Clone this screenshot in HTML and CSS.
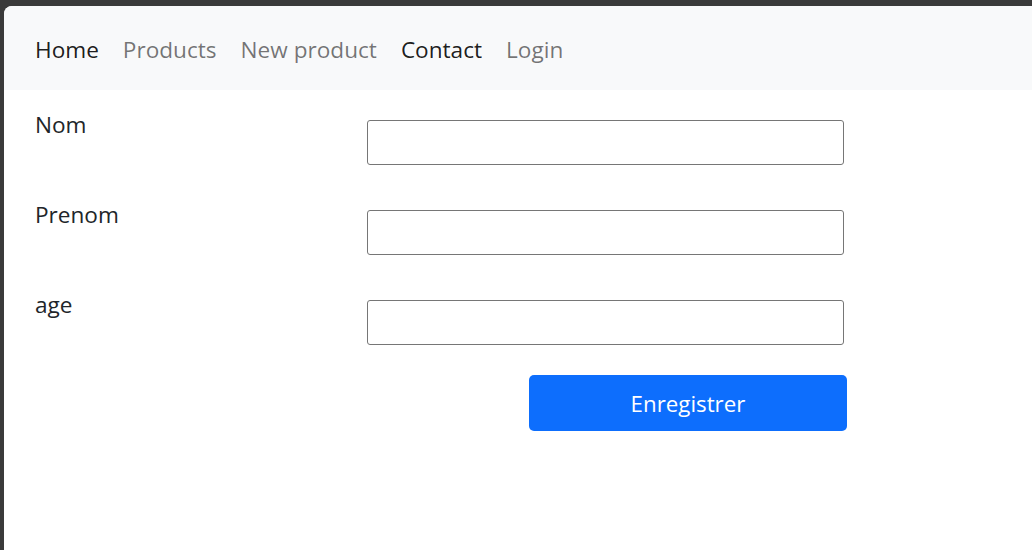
FILE: index.html
```html
<!DOCTYPE html>
<html lang="fr">
<head>
<meta charset="utf-8">
<title>Form</title>
<link rel="stylesheet" href="styles.css">
</head>
<body>
<div class="window">
  <nav class="navbar">
    <a class="nav-link active" href="#">Home</a>
    <a class="nav-link" href="#">Products</a>
    <a class="nav-link" href="#">New product</a>
    <a class="nav-link active" href="#">Contact</a>
    <a class="nav-link" href="#">Login</a>
  </nav>
  <form class="form">
    <label class="label" for="nom">Nom</label>
    <input class="input" id="nom" type="text">
    <label class="label" for="prenom">Prenom</label>
    <input class="input" id="prenom" type="text">
    <label class="label" for="age">age</label>
    <input class="input" id="age" type="text">
    <div class="actions">
      <button class="btn" type="button">Enregistrer</button>
    </div>
  </form>
</div>
</body>
</html>
```
FILE: styles.css
```css
html, body {
  margin: 0;
  padding: 0;
  background: #3a3a3a;
  height: 100%;
  overflow: hidden;
}
.window {
  margin: 6px 0 0 4px;
  height: 544px;
  background: #ffffff;
  border-top-left-radius: 8px;
  overflow: hidden;
  font-family: "Open Sans", "Noto Sans", sans-serif;
  color: #212529;
}
.navbar {
  display: flex;
  align-items: center;
  height: 84px;
  padding: 2px 0 0 31px;
  gap: 24px;
  background: #f8f9fa;
  box-sizing: border-box;
}
.nav-link {
  font-size: 22.6px;
  text-decoration: none;
  color: rgba(0, 0, 0, 0.55);
}
.nav-link.active {
  color: rgba(0, 0, 0, 0.9);
}
.form {
  display: grid;
  grid-template-columns: 332px 477px;
  row-gap: 45px;
  padding: 30px 0 0 31px;
}
.label {
  font-size: 22.6px;
  line-height: 30px;
  margin-top: -10px;
}
.input {
  height: 45px;
  box-sizing: border-box;
  border: 1px solid #767676;
  border-radius: 3px;
  margin: 0;
}
.actions {
  grid-column: 2;
  display: flex;
  justify-content: flex-end;
  margin-top: -15px;
  margin-right: -3px;
}
.btn {
  width: 318px;
  height: 56px;
  background: #0d6efd;
  color: #ffffff;
  border: none;
  border-radius: 5px;
  font-family: "Open Sans", "Noto Sans", sans-serif;
  font-size: 22.3px;
}
```
